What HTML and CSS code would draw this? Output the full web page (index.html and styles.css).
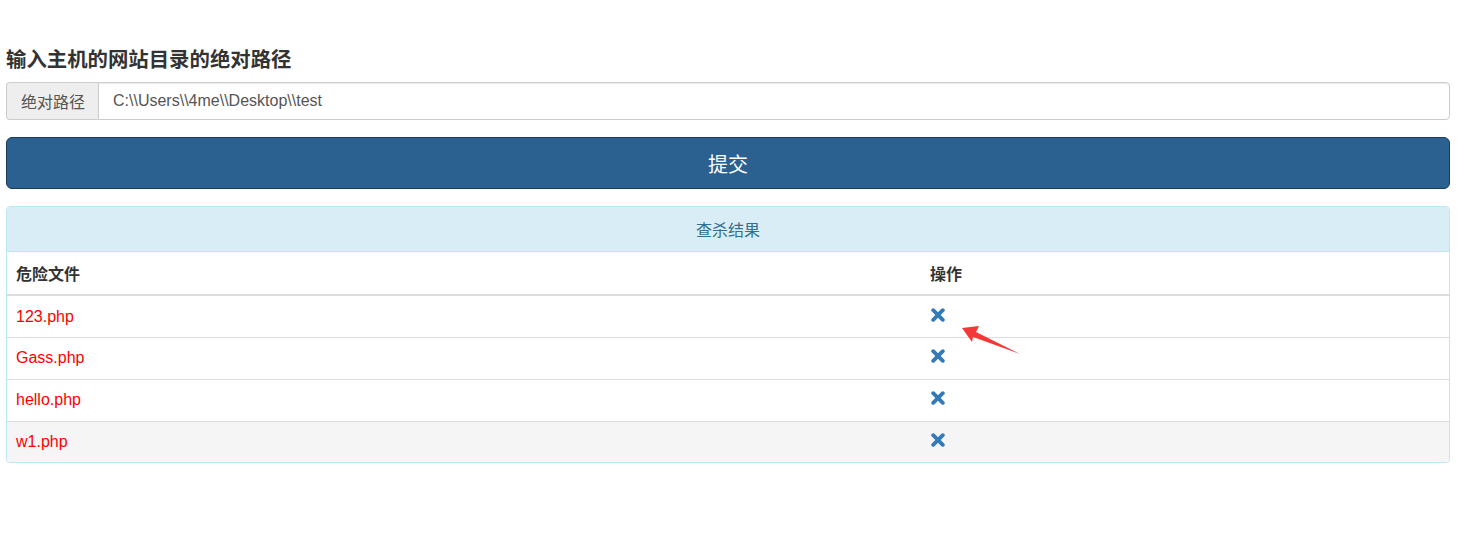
FILE: index.html
```html
<!DOCTYPE html>
<html lang="zh-CN">
<head>
<meta charset="utf-8">
<title>查杀</title>
<link rel="stylesheet" href="styles.css">
</head>
<body>
<div class="container">
  <h4 class="title">输入主机的网站目录的绝对路径</h4>
  <div class="input-group">
    <span class="addon">绝对路径</span>
    <input class="field" type="text" value="C:\\Users\\4me\\Desktop\\test">
  </div>
  <button class="submit" type="button">提交</button>
  <div class="panel">
    <div class="panel-heading">查杀结果</div>
    <table class="table">
      <thead>
        <tr><th class="col-file">危险文件</th><th>操作</th></tr>
      </thead>
      <tbody>
        <tr><td class="file">123.php</td><td><span class="remove"><svg viewBox="0 0 14 14" width="14" height="14"><path d="M2.2 2.2 L11.8 11.8 M11.8 2.2 L2.2 11.8" stroke="#337ab7" stroke-width="3.8" stroke-linecap="round"/></svg></span></td></tr>
        <tr><td class="file">Gass.php</td><td><span class="remove"><svg viewBox="0 0 14 14" width="14" height="14"><path d="M2.2 2.2 L11.8 11.8 M11.8 2.2 L2.2 11.8" stroke="#337ab7" stroke-width="3.8" stroke-linecap="round"/></svg></span></td></tr>
        <tr><td class="file">hello.php</td><td><span class="remove"><svg viewBox="0 0 14 14" width="14" height="14"><path d="M2.2 2.2 L11.8 11.8 M11.8 2.2 L2.2 11.8" stroke="#337ab7" stroke-width="3.8" stroke-linecap="round"/></svg></span></td></tr>
        <tr class="hover"><td class="file">w1.php</td><td><span class="remove"><svg viewBox="0 0 14 14" width="14" height="14"><path d="M2.2 2.2 L11.8 11.8 M11.8 2.2 L2.2 11.8" stroke="#337ab7" stroke-width="3.8" stroke-linecap="round"/></svg></span></td></tr>
      </tbody>
    </table>
  </div>
</div>
<svg class="arrow" viewBox="955 318 70 40" width="70" height="40">
  <polygon points="962,328 979,326 976,332 1020,354 973,337 972,342" fill="#f43838"/>
</svg>
</body>
</html>
```

FILE: styles.css
```css
* { box-sizing: border-box; }
html, body {
  margin: 0;
  padding: 0;
  background: #fff;
}
body {
  font-family: "Liberation Sans", "Noto Sans CJK SC", sans-serif;
  font-size: 16px;
  color: #333;
  position: relative;
}
.container {
  padding: 50px 11px 0 6px;
}
.title {
  margin: 0 0 12px;
  font-size: 20.4px;
  font-weight: bold;
  line-height: 20px;
  color: #333;
}
.input-group {
  display: flex;
  height: 38px;
}
.addon {
  display: flex;
  align-items: center;
  padding: 0 13px 0 14px;
  background: #eee;
  border: 1px solid #ccc;
  border-right: 0;
  border-radius: 4px 0 0 4px;
  color: #555;
  font-size: 16px;
  white-space: nowrap;
}
.field {
  flex: 1;
  height: 38px;
  border: 1px solid #ccc;
  border-radius: 0 4px 4px 0;
  padding: 0 14px;
  font-family: "Liberation Sans", "Noto Sans CJK SC", sans-serif;
  font-size: 16px;
  color: #555;
  box-shadow: inset 0 1px 1px rgba(0,0,0,.075);
  outline: none;
}
.submit {
  display: block;
  width: 100%;
  margin-top: 17px;
  height: 52px;
  background: #2b6191;
  border: 1px solid #1b3b58;
  border-radius: 6px;
  color: #fff;
  font-family: "Liberation Sans", "Noto Sans CJK SC", sans-serif;
  font-size: 20px;
  padding: 0;
}
.panel {
  margin-top: 17px;
  border: 1px solid #bce8f1;
  border-radius: 4px;
  box-shadow: 0 1px 1px rgba(0,0,0,.05);
  overflow: hidden;
}
.panel-heading {
  height: 45px;
  display: flex;
  align-items: center;
  justify-content: center;
  background: #d9edf7;
  color: #31708f;
  border-bottom: 1px solid #bce8f1;
  font-size: 16px;
}
.table {
  width: 100%;
  border-collapse: collapse;
}
.table th {
  text-align: left;
  font-weight: bold;
  height: 43px;
  padding: 0 9px;
  border-bottom: 2px solid #ddd;
  color: #333;
}
.col-file { width: 914px; }
.table td {
  height: 42px;
  padding: 0 9px;
  border-top: 1px solid #ddd;
  vertical-align: middle;
}
.table tbody tr:first-child td { border-top: 0; height: 42px; padding-top: 1px; }
.table tbody tr:last-child td { height: 41px; }
.file { color: #f00; }
.hover td { background: #f5f5f5; }
.remove {
  display: inline-block;
  width: 14px;
  height: 14px;
  margin-left: 1px;
  position: relative;
  top: 0;
}
.remove svg { display: block; }
.arrow {
  position: absolute;
  left: 955px;
  top: 318px;
}
```
